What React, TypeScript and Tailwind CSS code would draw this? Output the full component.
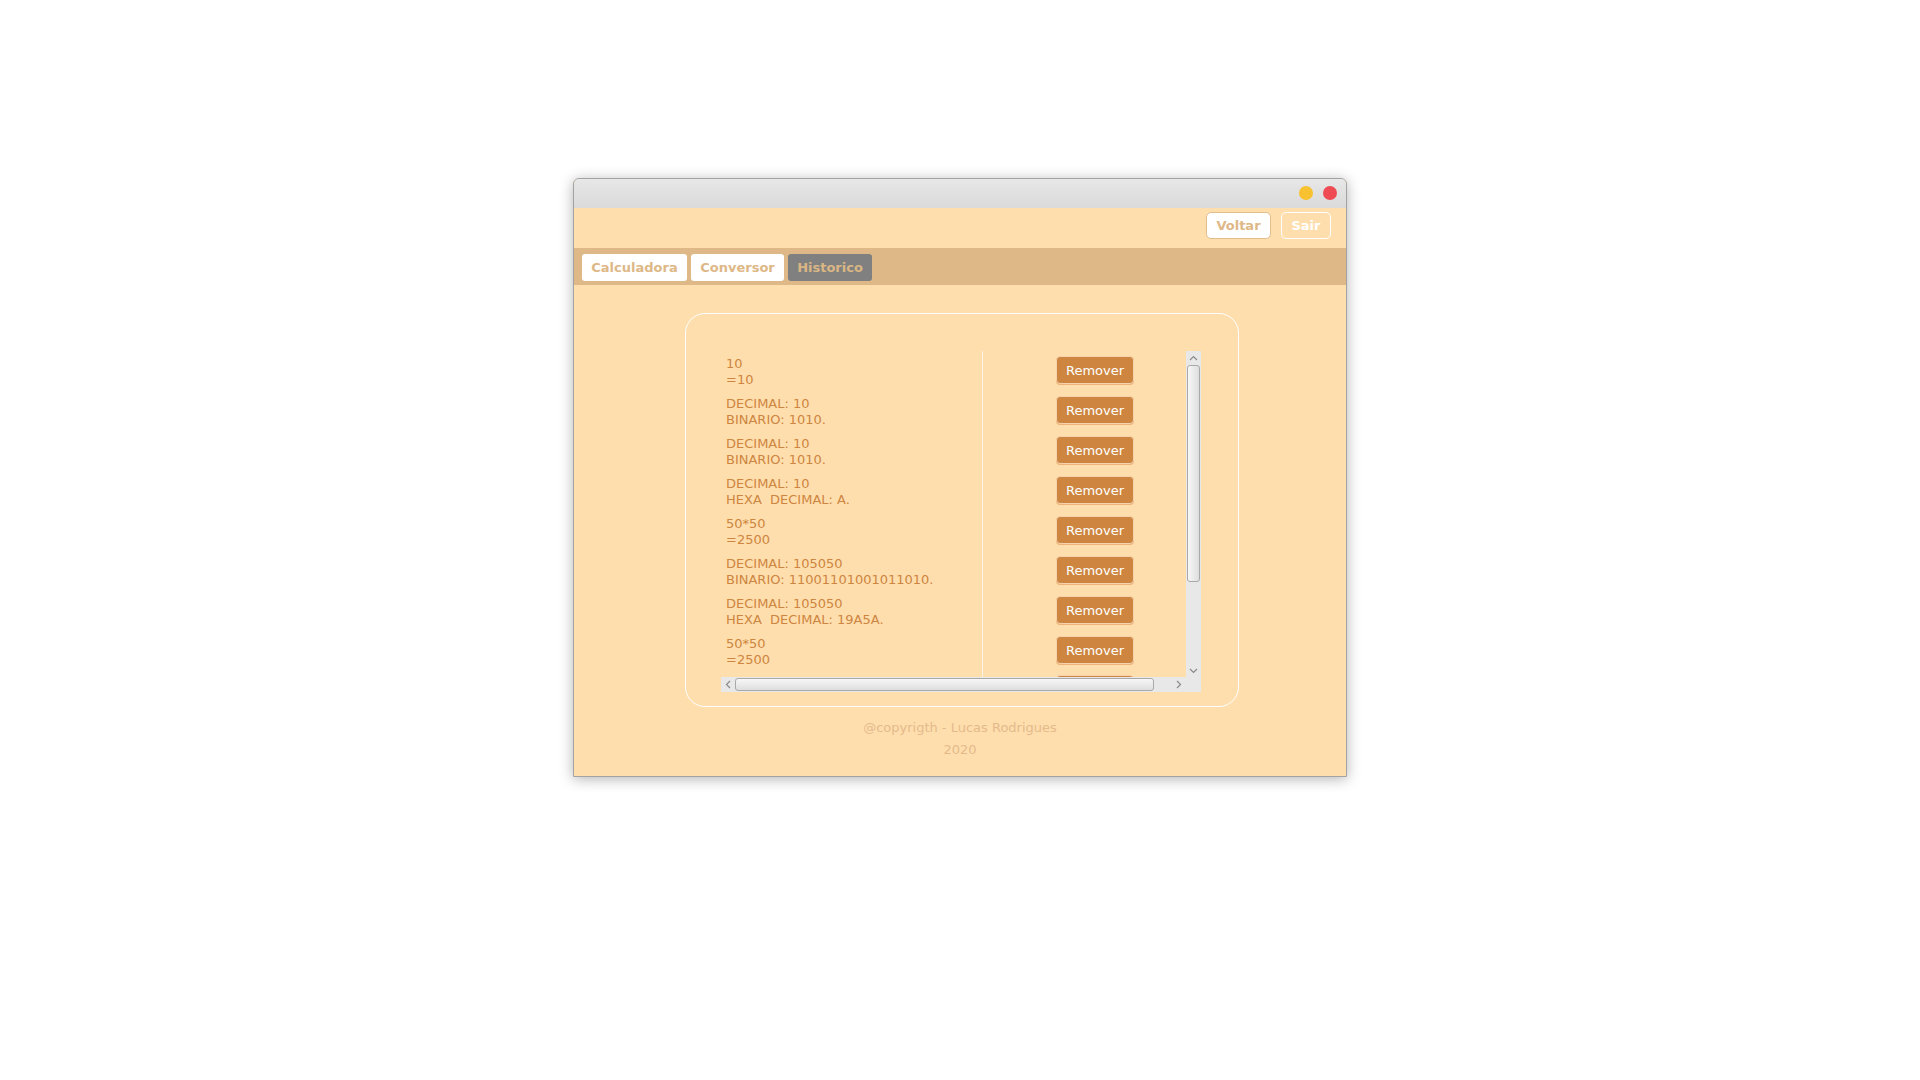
import React from "react";

type Entry = { top: string; bottom: string };

const entries: Entry[] = [
  { top: "10", bottom: "=10" },
  { top: "DECIMAL: 10", bottom: "BINARIO: 1010." },
  { top: "DECIMAL: 10", bottom: "BINARIO: 1010." },
  { top: "DECIMAL: 10", bottom: "HEXA  DECIMAL: A." },
  { top: "50*50", bottom: "=2500" },
  { top: "DECIMAL: 105050", bottom: "BINARIO: 11001101001011010." },
  { top: "DECIMAL: 105050", bottom: "HEXA  DECIMAL: 19A5A." },
  { top: "50*50", bottom: "=2500" },
];

function Chevron(props: { dir: "up" | "down" | "left" | "right" }) {
  const points = {
    up: "1,5 4.5,1.5 8,5",
    down: "1,2 4.5,5.5 8,2",
    left: "5,1 1.5,4.5 5,8",
    right: "2,1 5.5,4.5 2,8",
  }[props.dir];
  const vertical = props.dir === "up" || props.dir === "down";
  return (
    <svg
      width={vertical ? 9 : 7}
      height={vertical ? 7 : 9}
      viewBox={vertical ? "0 0 9 7" : "0 0 7 9"}
    >
      <polyline points={points} fill="none" stroke="#8a8a8a" strokeWidth="1.2" />
    </svg>
  );
}

function HistoryRow(props: { data: Entry }) {
  const { top, bottom } = props.data;
  return (
    <div className="flex h-[40px] shrink-0">
      <div className="w-[262px] shrink-0 border-r border-[#fff4e4] flex items-center pl-[5px] pt-[2px]">
        <div className="text-[13px] leading-[16px] text-[#cd853f] whitespace-pre">
          <p>{top}</p>
          <p>{bottom}</p>
        </div>
      </div>
      <div className="w-[224px] shrink-0 flex items-start justify-center pt-[5px]">
        <button className="w-[78px] h-[28px] rounded-[4px] bg-[#cd853f] border border-[#f6d3ae] shadow-[0_1px_0_#eeb27a] text-white text-[13px] leading-none">
          Remover
        </button>
      </div>
    </div>
  );
}

// last row only peeks out under the horizontal scrollbar
function PeekRow() {
  return (
    <div className="flex h-[40px] shrink-0">
      <div className="w-[262px] shrink-0 border-r border-[#fff4e4]" />
      <div className="w-[224px] shrink-0 flex items-start justify-center pt-[4px]">
        <div className="w-[78px] h-[28px] rounded-[4px] bg-[#cd853f] border border-[#f6d3ae]" />
      </div>
    </div>
  );
}

function HistoryTable() {
  return (
    <div className="w-[480px] h-[341px] flex flex-col">
      <div className="flex h-[326px]">
        <div className="w-[465px] h-[326px] overflow-hidden flex flex-col">
          {entries.map((e, i) => (
            <HistoryRow key={i} data={e} />
          ))}
          <PeekRow />
        </div>
        <div className="w-[15px] h-[326px] bg-[#e8e8e8] flex flex-col items-center">
          <div className="h-[14px] flex items-center justify-center">
            <Chevron dir="up" />
          </div>
          <div className="w-[13px] h-[217px] rounded-[3px] border border-[#a9a9a9] bg-gradient-to-r from-[#f7f7f7] to-[#dedede]" />
          <div className="flex-1" />
          <div className="h-[14px] flex items-center justify-center">
            <Chevron dir="down" />
          </div>
        </div>
      </div>
      <div className="flex h-[15px]">
        <div className="w-[465px] h-[15px] bg-[#e8e8e8] flex items-center">
          <div className="w-[14px] flex justify-center">
            <Chevron dir="left" />
          </div>
          <div className="w-[419px] h-[13px] rounded-[3px] border border-[#a9a9a9] bg-gradient-to-b from-[#f7f7f7] to-[#dedede]" />
          <div className="flex-1 flex justify-end pr-[4px]">
            <Chevron dir="right" />
          </div>
        </div>
        <div className="w-[15px] h-[15px] bg-[#e8e8e8]" />
      </div>
    </div>
  );
}

export default function App() {
  return (
    <div
      className="w-full min-h-screen bg-white flex justify-center pt-[178px]"
      style={{ fontFamily: '"DejaVu Sans", "Liberation Sans", sans-serif' }}
    >
      <div className="w-[774px] h-[599px] flex flex-col border border-[#a3a3a3] rounded-t-[6px] bg-[#ffdead] shadow-[0_2px_14px_rgba(0,0,0,0.3)] overflow-hidden">
        <div className="h-[29px] shrink-0 bg-gradient-to-b from-[#e7e7e7] to-[#dadada] flex items-start justify-end gap-[10px] pt-[7px] pr-[9px]">
          <span className="w-[14px] h-[14px] rounded-full bg-[#f8c12f]" />
          <span className="w-[14px] h-[14px] rounded-full bg-[#ee4b55]" />
        </div>

        <div className="h-[40px] shrink-0 flex items-start justify-end gap-[10px] pt-[4px] pr-[15px]">
          <button className="w-[65px] h-[27px] rounded-[5px] bg-white border border-[#e2bd8e] text-[#deb887] text-[13px] font-bold">
            Voltar
          </button>
          <button className="w-[50px] h-[27px] rounded-[5px] border border-white text-white text-[13px] font-bold">
            Sair
          </button>
        </div>

        <div className="h-[37px] shrink-0 bg-[#deb887] flex items-start gap-[4px] pt-[6px] pl-[8px]">
          <button className="w-[105px] h-[27px] rounded-[3px] bg-white text-[#deb887] text-[13px] font-bold">
            Calculadora
          </button>
          <button className="w-[93px] h-[27px] rounded-[3px] bg-white text-[#deb887] text-[13px] font-bold">
            Conversor
          </button>
          <button className="w-[84px] h-[27px] rounded-[3px] bg-[#808080] text-[#d9b684] text-[13px] font-bold">
            Historico
          </button>
        </div>

        <div className="pt-[28px] pl-[111px]">
          <div className="w-[554px] h-[394px] rounded-[20px] border border-white pl-[35px] pt-[37px]">
            <HistoryTable />
          </div>
        </div>

        <div className="mt-[10px] text-center text-[13px] leading-[22px] text-[#e4ba8c]">
          <p>@copyrigth - Lucas Rodrigues</p>
          <p>2020</p>
        </div>
      </div>
    </div>
  );
}
